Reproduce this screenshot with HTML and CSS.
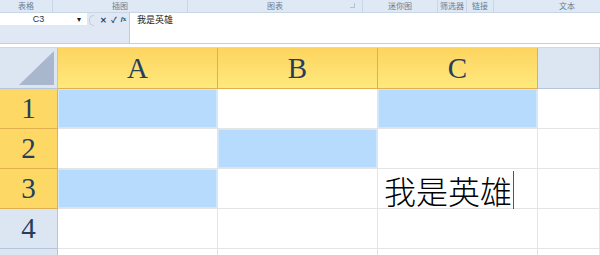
FILE: index.html
```html
<!DOCTYPE html>
<html lang="zh-CN">
<head>
    <meta charset="UTF-8">
    <title>Sheet - 我是英雄</title>
    <link rel="stylesheet" href="styles.css">
</head>
<body>
    <!-- Ribbon group labels -->
    <div class="ribbon">
        <div class="group g-table">表格</div>
        <div class="group g-illus">插图</div>
        <div class="group g-chart">图表<span class="launcher"></span></div>
        <div class="group g-spark">迷你图</div>
        <div class="group g-filter">筛选器</div>
        <div class="group g-link">链接</div>
        <div class="group g-text">文本</div>
    </div>

    <!-- Formula bar -->
    <div class="formula-bar">
        <div class="name-col">
            <div class="name-box">
                <span class="cell-ref">C3</span>
                <span class="drop">▾</span>
            </div>
        </div>
        <div class="fx-tools">
            <span class="grip"></span>
            <span class="tool x">✕</span>
            <span class="tool ok">✓</span>
            <span class="tool fx"><i>f</i>x</span>
        </div>
        <div class="formula-input">我是英雄</div>
    </div>

    <!-- Grid -->
    <div class="sheet">
        <div class="corner"><span class="tri"></span></div>
        <div class="col-head sel">A</div>
        <div class="col-head sel">B</div>
        <div class="col-head sel">C</div>
        <div class="col-head"></div>

        <div class="row-head sel">1</div>
        <div class="cell hl"></div>
        <div class="cell"></div>
        <div class="cell hl"></div>
        <div class="cell"></div>

        <div class="row-head sel">2</div>
        <div class="cell"></div>
        <div class="cell hl"></div>
        <div class="cell"></div>
        <div class="cell"></div>

        <div class="row-head sel">3</div>
        <div class="cell hl"></div>
        <div class="cell"></div>
        <div class="cell editing">我是英雄<span class="caret"></span></div>
        <div class="cell"></div>

        <div class="row-head">4</div>
        <div class="cell"></div>
        <div class="cell"></div>
        <div class="cell"></div>
        <div class="cell"></div>

        <!-- row 5 only shows its top edge -->
        <div class="row-head"></div>
        <div class="cell"></div>
        <div class="cell"></div>
        <div class="cell"></div>
        <div class="cell"></div>
    </div>
</body>
</html>
```

FILE: styles.css
```css
body {
    margin: 0;
    padding: 0;
    width: 600px;
    height: 255px;
    overflow: hidden;
    background-color: #ffffff;
    font-family: "Noto Sans CJK SC", "Liberation Sans", sans-serif;
}

/* Ribbon labels */
.ribbon {
    display: flex;
    height: 12px;
    background-color: #dfe9f5;
    border-bottom: 1px solid #c9d6e6;
    overflow: hidden;
}

.group {
    flex: none;
    position: relative;
    display: flex;
    justify-content: center;
    align-items: center;
    font-size: 8px;
    line-height: 12px;
    color: #6a7c93;
    border-right: 1px solid #c9d6e6;
    box-sizing: border-box;
}

.g-table { width: 53px; }
.g-illus { width: 135px; }
.g-chart { width: 175px; }
.g-spark { width: 75px; }
.g-filter { width: 29px; }
.g-link { width: 27px; }
.g-text { width: 146px; border-right: none; }

.launcher {
    position: absolute;
    right: 7px;
    top: 3px;
    width: 4px;
    height: 4px;
    border-right: 1px solid #b5c2d2;
    border-bottom: 1px solid #b5c2d2;
}

/* Formula bar */
.formula-bar {
    display: flex;
    height: 30px;
    background-color: #dfe8f4;
    border-bottom: 1px solid #c3cfdd;
}

.name-col {
    width: 87px;
}

.name-box {
    display: flex;
    align-items: center;
    height: 12px;
    background-color: #ffffff;
    font-family: "Liberation Sans", sans-serif;
    font-size: 9px;
    color: #333333;
}

.cell-ref {
    flex: 1;
    text-align: center;
}

.drop {
    width: 10px;
    font-size: 8px;
    color: #222222;
}

.fx-tools {
    display: flex;
    align-items: flex-start;
    gap: 4px;
    width: 43px;
    padding-top: 1px;
    padding-left: 2px;
    box-sizing: border-box;
    border-right: 1px solid #bccbdd;
}

.grip {
    width: 4px;
    height: 9px;
    margin-top: 1px;
    margin-right: 2px;
    border: 1px solid #c4ccd6;
    border-right: none;
    border-radius: 5px 0 0 5px;
}

.tool {
    font-size: 8px;
    line-height: 11px;
    color: #2c4a6e;
    font-weight: bold;
}

.tool.fx {
    font-family: "Liberation Serif", serif;
    font-size: 7px;
    letter-spacing: -0.5px;
}

.formula-input {
    flex: 1;
    background-color: #ffffff;
    font-size: 9px;
    line-height: 13px;
    padding-left: 7px;
    color: #222222;
}

/* Sheet grid */
.sheet {
    display: grid;
    grid-template-columns: 58px 160px 160px 160px 1fr;
    grid-template-rows: 41px repeat(5, 40px);
    margin-top: 3px;
    border-top: 1px solid #cfd9e6;
}

.corner {
    position: relative;
    background-color: #dce6f3;
    border-right: 1px solid #b6c5d9;
    border-bottom: 1px solid #b6c5d9;
}

.tri {
    position: absolute;
    right: 3px;
    bottom: 3px;
    width: 0;
    height: 0;
    border-left: 35px solid transparent;
    border-bottom: 34px solid #a8b7ce;
}

.col-head,
.row-head {
    display: flex;
    justify-content: center;
    align-items: center;
    font-family: "Liberation Serif", serif;
    font-size: 29px;
    color: #263e5e;
    background-color: #dce6f3;
    border-right: 1px solid #b6c5d9;
    border-bottom: 1px solid #b6c5d9;
}

.col-head.sel {
    background: linear-gradient(to bottom, #fdd45f, #ffe97d);
    border-right-color: #e2b14f;
    border-bottom-color: #e2b14f;
}

.row-head.sel {
    background-color: #fdd865;
    border-right-color: #e2b14f;
    border-bottom-color: #e2b14f;
}

.cell {
    position: relative;
    border-right: 1px solid #e2e4e6;
    border-bottom: 1px solid #e2e4e6;
}

.cell.hl {
    background-color: #b7dbfd;
    box-shadow: inset 0 0 0 1px #d2e7fc;
}

.editing {
    display: flex;
    align-items: center;
    padding-left: 6px;
    padding-top: 2px;
    font-family: "Noto Sans CJK SC", serif;
    font-weight: 300;
    font-size: 32px;
    color: #000000;
}

.caret {
    width: 1px;
    height: 38px;
    margin-left: 1px;
    background-color: #555555;
}
```
